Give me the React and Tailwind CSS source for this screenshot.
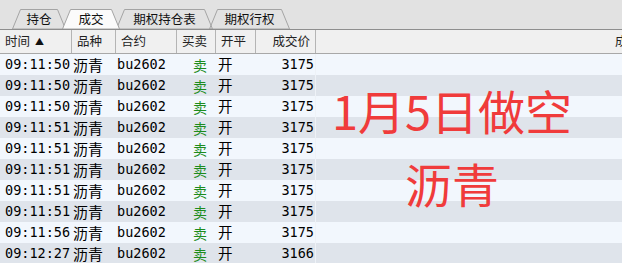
const rows = [
  ["09:11:50", "3175"],
  ["09:11:50", "3175"],
  ["09:11:50", "3175"],
  ["09:11:51", "3175"],
  ["09:11:51", "3175"],
  ["09:11:51", "3175"],
  ["09:11:51", "3175"],
  ["09:11:51", "3175"],
  ["09:11:56", "3175"],
  ["09:12:27", "3166"],
];

const tabs = [
  { label: "持仓", w: "w-[54px]", width: 54, first: true },
  { label: "成交", w: "w-[58px]", width: 58, active: true },
  { label: "期权持仓表", w: "w-[97px]", width: 97 },
  { label: "期权行权", w: "w-[81px]", width: 81 },
];

// font stacks
const CJK = "font-['Noto_Sans_CJK_SC',sans-serif]";
const MONO = "font-['DejaVu_Sans_Mono','Noto_Sans_CJK_SC',monospace]";

function Tab({ tab }) {
  const W = tab.width;

  return (
    <div
      className={`relative h-[20px] ${tab.w} ${tab.first ? "ml-[12px]" : "-ml-[4px]"} ${tab.active ? "z-10" : ""} flex items-center justify-center`}
    >
      {/* tab outline */}
      <svg className="absolute inset-0" width={W} height="20">
        <polygon
          points={`0.5,20 8.5,0.5 ${W - 8.5},0.5 ${W - 0.5},20`}
          fill={tab.active ? "#fbfbfb" : "none"}
          stroke="#a4a4a4"
          strokeWidth="1"
        />
      </svg>

      <span className={`relative text-[12.5px] text-[#111] leading-none pt-[1px] ${CJK}`}>
        {tab.label}
      </span>
    </div>
  );
}

function HeadCell({ w, children, right }) {
  return (
    <div
      className={`${w} h-full flex items-center shrink-0 ${right ? "justify-end pr-[5px]" : "pl-[5px]"} border-r border-[#b4b4b4] text-[12.5px] text-[#222] ${CJK}`}
    >
      {children}
    </div>
  );
}

export default function App() {
  return (
    <div className="w-[622px] h-[263px] overflow-hidden bg-[#e2e2e2] relative">

      {/* TABS */}

      <div className="h-[30px] pt-[9px] flex items-end border-b border-[#8e8e8e]">
        <div className="flex h-[20px]">
          {tabs.map((t) => (
            <Tab key={t.label} tab={t} />
          ))}
        </div>
      </div>

      {/* HEADER */}

      <div className="h-[24px] bg-[#f0f0f0] border-b border-[#a8a8a8] flex">
        <HeadCell w="w-[72px]">
          时间
          <span className="ml-[5px] text-[9px] text-[#111]">▲</span>
        </HeadCell>
        <HeadCell w="w-[44px]">品种</HeadCell>
        <HeadCell w="w-[61px]">合约</HeadCell>
        <HeadCell w="w-[39px]">买卖</HeadCell>
        <HeadCell w="w-[40px]">开平</HeadCell>
        <HeadCell w="w-[60px]" right>成交价</HeadCell>
        <div className={`flex-1 h-full overflow-hidden whitespace-nowrap flex items-center pl-[299px] text-[12.5px] text-[#222] ${CJK}`}>
          成交时间
        </div>
      </div>

      {/* ROWS */}

      <div>
        {rows.map((r, i) => (
          <div
            key={i}
            className={`h-[21px] flex items-center text-black ${i % 2 === 0 ? "bg-[#f2f7fd]" : "bg-[#dfe4eb]"}`}
          >
            <div className={`w-[72px] pl-[5px] text-[13.5px] leading-none ${MONO}`}>
              {r[0]}
            </div>
            <div className={`w-[44px] pl-[1px] text-[15px] leading-none ${CJK}`}>
              沥青
            </div>
            <div className={`w-[61px] pl-[1px] text-[13.5px] leading-none ${MONO}`}>
              bu2602
            </div>
            <div className={`w-[39px] pl-[16px] text-[14px] leading-none text-[#1c8c1c] ${CJK}`}>
              卖
            </div>
            <div className={`w-[40px] pl-[2px] text-[14.5px] leading-none ${CJK}`}>
              开
            </div>
            <div className={`w-[60px] pr-[1px] h-full flex items-center justify-end text-[13.5px] leading-none border-r border-[#eef2f7] ${MONO}`}>
              {r[1]}
            </div>
          </div>
        ))}
      </div>

      {/* OVERLAY NOTE */}

      <div
        className={`absolute left-[322px] top-[73px] w-[260px] text-center text-[#f03b3b] text-[47px] leading-[73px] ${CJK}`}
      >
        <div>1月5日做空</div>
        <div>沥青</div>
      </div>

    </div>
  );
}
